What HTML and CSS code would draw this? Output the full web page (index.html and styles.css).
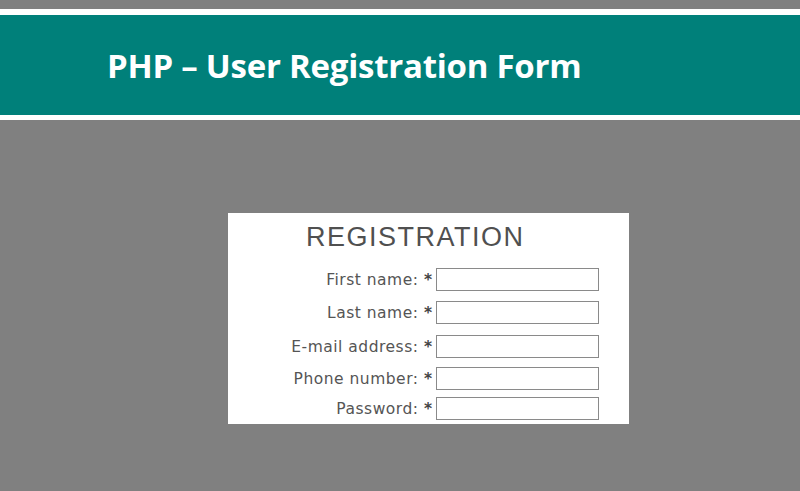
FILE: index.html
```html
<!DOCTYPE html>
<html>
<head>
<meta charset="utf-8">
<link rel="stylesheet" href="styles.css">
</head>
<body>
<div class="page">
  <header class="banner">
    <h1 class="banner-title">PHP – User Registration Form</h1>
  </header>
  <main class="stage">
    <form class="card">
      <h2 class="card-title">REGISTRATION</h2>
      <div class="rows">
        <div class="row r1"><label class="lbl">First name: <b class="req">*</b></label><span class="field"></span></div>
        <div class="row r2"><label class="lbl">Last name: <b class="req">*</b></label><span class="field"></span></div>
        <div class="row r3"><label class="lbl">E-mail address: <b class="req">*</b></label><span class="field"></span></div>
        <div class="row r4"><label class="lbl">Phone number: <b class="req">*</b></label><span class="field"></span></div>
        <div class="row r5"><label class="lbl">Password: <b class="req">*</b></label><span class="field"></span></div>
      </div>
    </form>
  </main>
</div>
</body>
</html>
```
FILE: styles.css
```css
html, body {
  margin: 0;
  padding: 0;
  background: #808080;
}
.page {
  width: 800px;
  height: 491px;
  overflow: hidden;
  padding-top: 9px;
  box-sizing: border-box;
}
.banner {
  border-top: 6px solid #ffffff;
  border-bottom: 5px solid #ffffff;
  background: #00807a;
  height: 100px;
  display: flex;
  align-items: center;
  padding-left: 107px;
}
.banner-title {
  margin: 0;
  font-family: "Open Sans", sans-serif;
  font-weight: 700;
  font-size: 33px;
  letter-spacing: -0.25px;
  color: #ffffff;
  line-height: 1;
  padding-top: 1px;
}
.stage {
  display: flex;
  padding-top: 93px;
  padding-left: 228px;
}
.card {
  width: 401px;
  height: 211px;
  background: #ffffff;
  box-sizing: border-box;
  display: flex;
  flex-direction: column;
}
.card-title {
  margin: 0;
  padding-top: 9px;
  padding-left: 78px;
  font-family: "Liberation Sans", sans-serif;
  font-weight: 400;
  font-size: 27px;
  line-height: 30px;
  color: #505050;
  letter-spacing: 1.5px;
}
.rows {
  display: flex;
  flex-direction: column;
  padding-top: 16px;
}
.row {
  display: flex;
  align-items: center;
  height: 23px;
}
.r2 { margin-top: 10px; }
.r3 { margin-top: 11px; }
.r4 { margin-top: 9px; }
.r5 { margin-top: 7px; }
.lbl {
  width: 204px;
  text-align: right;
  font-family: "DejaVu Sans", sans-serif;
  font-size: 15.5px;
  letter-spacing: 0.5px;
  color: #555555;
  padding-right: 4px;
}
.req {
  font-weight: 700;
  color: #444444;
  letter-spacing: 0;
}
.field {
  width: 163px;
  height: 23px;
  box-sizing: border-box;
  border: 1.5px solid #8a8a8a;
  background: #ffffff;
}
```
